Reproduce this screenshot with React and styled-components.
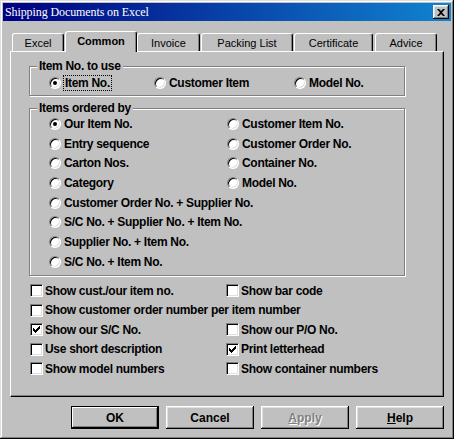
import styled, { createGlobalStyle, css } from "styled-components";

const GlobalStyle = createGlobalStyle`
    html, body {
        margin: 0;
        padding: 0;
        background: #c0c0c0;
    }
`;

const tabs = [
    { label: "Excel", w: 52, ml: 2 },
    { label: "Common", w: 72, ml: 1, active: true },
    { label: "Invoice", w: 63, ml: 0 },
    { label: "Packing List", w: 92, ml: 1 },
    { label: "Certificate", w: 79, ml: 1 },
    { label: "Advice", w: 62, ml: 2 },
];

const orderedBy = [
    { label: "Our Item No.", on: true },
    { label: "Customer Item No." },
    { label: "Entry sequence" },
    { label: "Customer Order No." },
    { label: "Carton Nos." },
    { label: "Container No." },
    { label: "Category" },
    { label: "Model No." },
    { label: "Customer Order No. + Supplier No.", wide: true },
    { label: "S/C No. + Supplier No. + Item No.", wide: true },
    { label: "Supplier No. + Item No.", wide: true },
    { label: "S/C No. + Item No.", wide: true },
];

const checks = [
    { label: "Show cust./our item no." },
    { label: "Show bar code" },
    { label: "Show customer order number per item number", wide: true },
    { label: "Show our S/C No.", on: true },
    { label: "Show our P/O No." },
    { label: "Use short description" },
    { label: "Print letterhead", on: true },
    { label: "Show model numbers" },
    { label: "Show container numbers" },
];

const App = () => {
    return (
        <>
            <GlobalStyle />
            <Window>
                <TitleBar>
                    <Title>Shipping Documents on Excel</Title>
                    <CloseButton aria-label="Close">
                        <svg width="8" height="7" viewBox="0 0 8 7">
                            <path d="M0 0h2l2 2 2-2h2L5 3.5 8 7H6L4 5 2 7H0l3-3.5z" fill="#000" />
                        </svg>
                    </CloseButton>
                </TitleBar>

                <TabRow>
                    {tabs.map((t) => (
                        <Tab key={t.label} $w={t.w} $ml={t.ml} $active={t.active}>
                            {t.label}
                        </Tab>
                    ))}
                </TabRow>

                <Panel>
                    <Group $h={30} $pt={8}>
                        <Caption>Item No. to use</Caption>
                        <ItemGrid>
                            <Option>
                                <RadioMark $on />
                                <Focus>Item No.</Focus>
                            </Option>
                            <Option>
                                <RadioMark />
                                <span>Customer Item</span>
                            </Option>
                            <Option>
                                <RadioMark />
                                <span>Model No.</span>
                            </Option>
                        </ItemGrid>
                    </Group>

                    <Group $h={168} $pt={5} $mt={12}>
                        <Caption>Items ordered by</Caption>
                        <OrderGrid>
                            {orderedBy.map((o) => (
                                <Option key={o.label} $wide={o.wide}>
                                    <RadioMark $on={o.on} />
                                    <span>{o.label}</span>
                                </Option>
                            ))}
                        </OrderGrid>
                    </Group>

                    <CheckGrid>
                        {checks.map((c) => (
                            <Option key={c.label} $wide={c.wide} $gap={2}>
                                <CheckMark>
                                    {c.on && (
                                        <svg width="7" height="7" viewBox="0 0 7 7">
                                            <path d="M0 2h1v1h1v1h1V3h1V2h1V1h1V0h1v3H6v1H5v1H4v1H3v1H2V6H1V5H0z" fill="#000" />
                                        </svg>
                                    )}
                                </CheckMark>
                                <span>{c.label}</span>
                            </Option>
                        ))}
                    </CheckGrid>
                </Panel>

                <ButtonRow>
                    <Button $default>OK</Button>
                    <Button>Cancel</Button>
                    <Button disabled><u>A</u>pply</Button>
                    <Button><u>H</u>elp</Button>
                </ButtonRow>
            </Window>
        </>
    );
};

const Window = styled.div`
    width: 454px;
    height: 439px;
    box-sizing: border-box;
    padding: 3px;
    background: #c0c0c0;
    display: flex;
    flex-direction: column;
    box-shadow: inset -1px -1px #000, inset 1px 1px #dfdfdf,
        inset -2px -2px #808080, inset 2px 2px #fff;
    font-family: "Liberation Sans", Arial, sans-serif;
`;

const TitleBar = styled.div`
    height: 18px;
    flex-shrink: 0;
    display: flex;
    align-items: center;
    justify-content: space-between;
    padding: 0 2px;
    background: linear-gradient(90deg, #000080, #1084d0);
`;

const Title = styled.span`
    color: #fff;
    font-family: "Liberation Serif", "Times New Roman", serif;
    font-size: 12px;
    letter-spacing: -0.1px;
    line-height: 18px;
    white-space: nowrap;
`;

const CloseButton = styled.button`
    width: 16px;
    height: 14px;
    padding: 0;
    border: none;
    background: #c0c0c0;
    display: flex;
    align-items: center;
    justify-content: center;
    box-shadow: inset -1px -1px #000, inset 1px 1px #fff,
        inset -2px -2px #808080, inset 2px 2px #dfdfdf;
`;

const TabRow = styled.div`
    height: 20px;
    margin: 10px 7px 0;
    display: flex;
    align-items: flex-end;
    position: relative;
    z-index: 1;
`;

const Tab = styled.div`
    width: ${(p) => p.$w}px;
    margin-left: ${(p) => p.$ml}px;
    height: 18px;
    box-sizing: border-box;
    border-top: 1px solid #fff;
    border-left: 1px solid #fff;
    border-right: 1px solid #000;
    border-radius: 3px 3px 0 0;
    box-shadow: inset -1px 0 #808080;
    display: flex;
    align-items: center;
    justify-content: center;
    font-size: 11px;
    color: #000;
    background: #c0c0c0;

    ${(p) =>
        p.$active &&
        css`
            height: 21px;
            margin-bottom: -1px;
            font-weight: bold;
            padding-bottom: 2px;
        `}
`;

const Panel = styled.div`
    height: 346px;
    margin: 0 7px;
    flex-shrink: 0;
    box-sizing: border-box;
    border-top: 1px solid #fff;
    border-left: 1px solid #fff;
    border-right: 1px solid #000;
    border-bottom: 1px solid #000;
    box-shadow: inset -1px -1px #808080;
    padding: 14px 0 0 18px;
    font-size: 12px;
    font-weight: bold;
    letter-spacing: -0.3px;
    color: #000;
`;

const Group = styled.div`
    position: relative;
    width: 376px;
    height: ${(p) => p.$h}px;
    margin-top: ${(p) => p.$mt || 0}px;
    box-sizing: border-box;
    border: 1px solid #808080;
    box-shadow: 1px 1px 0 #fff, inset 1px 1px 0 #fff;
    padding: ${(p) => p.$pt}px 0 0 19px;
`;

const Caption = styled.span`
    position: absolute;
    top: -8px;
    left: 7px;
    padding: 0 2px;
    line-height: 14px;
    background: #c0c0c0;
`;

const ItemGrid = styled.div`
    display: grid;
    grid-template-columns: 105px 140px auto;
    grid-auto-rows: 16px;
`;

const OrderGrid = styled.div`
    display: grid;
    grid-template-columns: 178px auto;
    grid-auto-rows: 19.7px;
`;

const CheckGrid = styled.div`
    display: grid;
    grid-template-columns: 196px auto;
    grid-auto-rows: 19.5px;
    margin: 5px 0 0 1px;
`;

const Option = styled.div`
    display: flex;
    align-items: center;
    gap: ${(p) => p.$gap || 3}px;
    white-space: nowrap;
    grid-column: ${(p) => (p.$wide ? "1 / -1" : "auto")};
`;

const RadioMark = styled.span`
    position: relative;
    flex-shrink: 0;
    width: 12px;
    height: 12px;
    box-sizing: border-box;
    border-radius: 50%;
    background: #fff;
    border: 1px solid;
    border-color: #808080 #fff #fff #808080;
    box-shadow: inset 1px 1px #000, inset -1px -1px #dfdfdf;

    &::after {
        content: "";
        display: ${(p) => (p.$on ? "block" : "none")};
        position: absolute;
        left: 3px;
        top: 3px;
        width: 4px;
        height: 4px;
        border-radius: 50%;
        background: #000;
    }
`;

const CheckMark = styled.span`
    flex-shrink: 0;
    width: 13px;
    height: 13px;
    box-sizing: border-box;
    background: #fff;
    border: 1px solid;
    border-color: #808080 #fff #fff #808080;
    box-shadow: inset 1px 1px #000, inset -1px -1px #dfdfdf;
    display: flex;
    align-items: center;
    justify-content: center;
`;

const Focus = styled.span`
    outline: 1px dotted #000;
    outline-offset: 0;
    padding: 0 1px;
    line-height: 14px;
`;

const ButtonRow = styled.div`
    display: flex;
    justify-content: flex-end;
    gap: 7px;
    margin: 9px 7px 0;
`;

const Button = styled.button`
    width: 88px;
    height: 23px;
    padding: 0;
    border: none;
    background: #c0c0c0;
    font-family: "Liberation Sans", Arial, sans-serif;
    font-size: 12px;
    font-weight: bold;
    color: #000;
    box-shadow: inset -1px -1px #000, inset 1px 1px #fff,
        inset -2px -2px #808080, inset 2px 2px #dfdfdf;

    ${(p) =>
        p.$default &&
        css`
            box-shadow: inset 0 0 0 1px #000, inset -2px -2px #000,
                inset 2px 2px #fff, inset -3px -3px #808080;
        `}

    &:disabled {
        color: #808080;
        text-shadow: 1px 1px #fff;
    }
`;

export default App;
